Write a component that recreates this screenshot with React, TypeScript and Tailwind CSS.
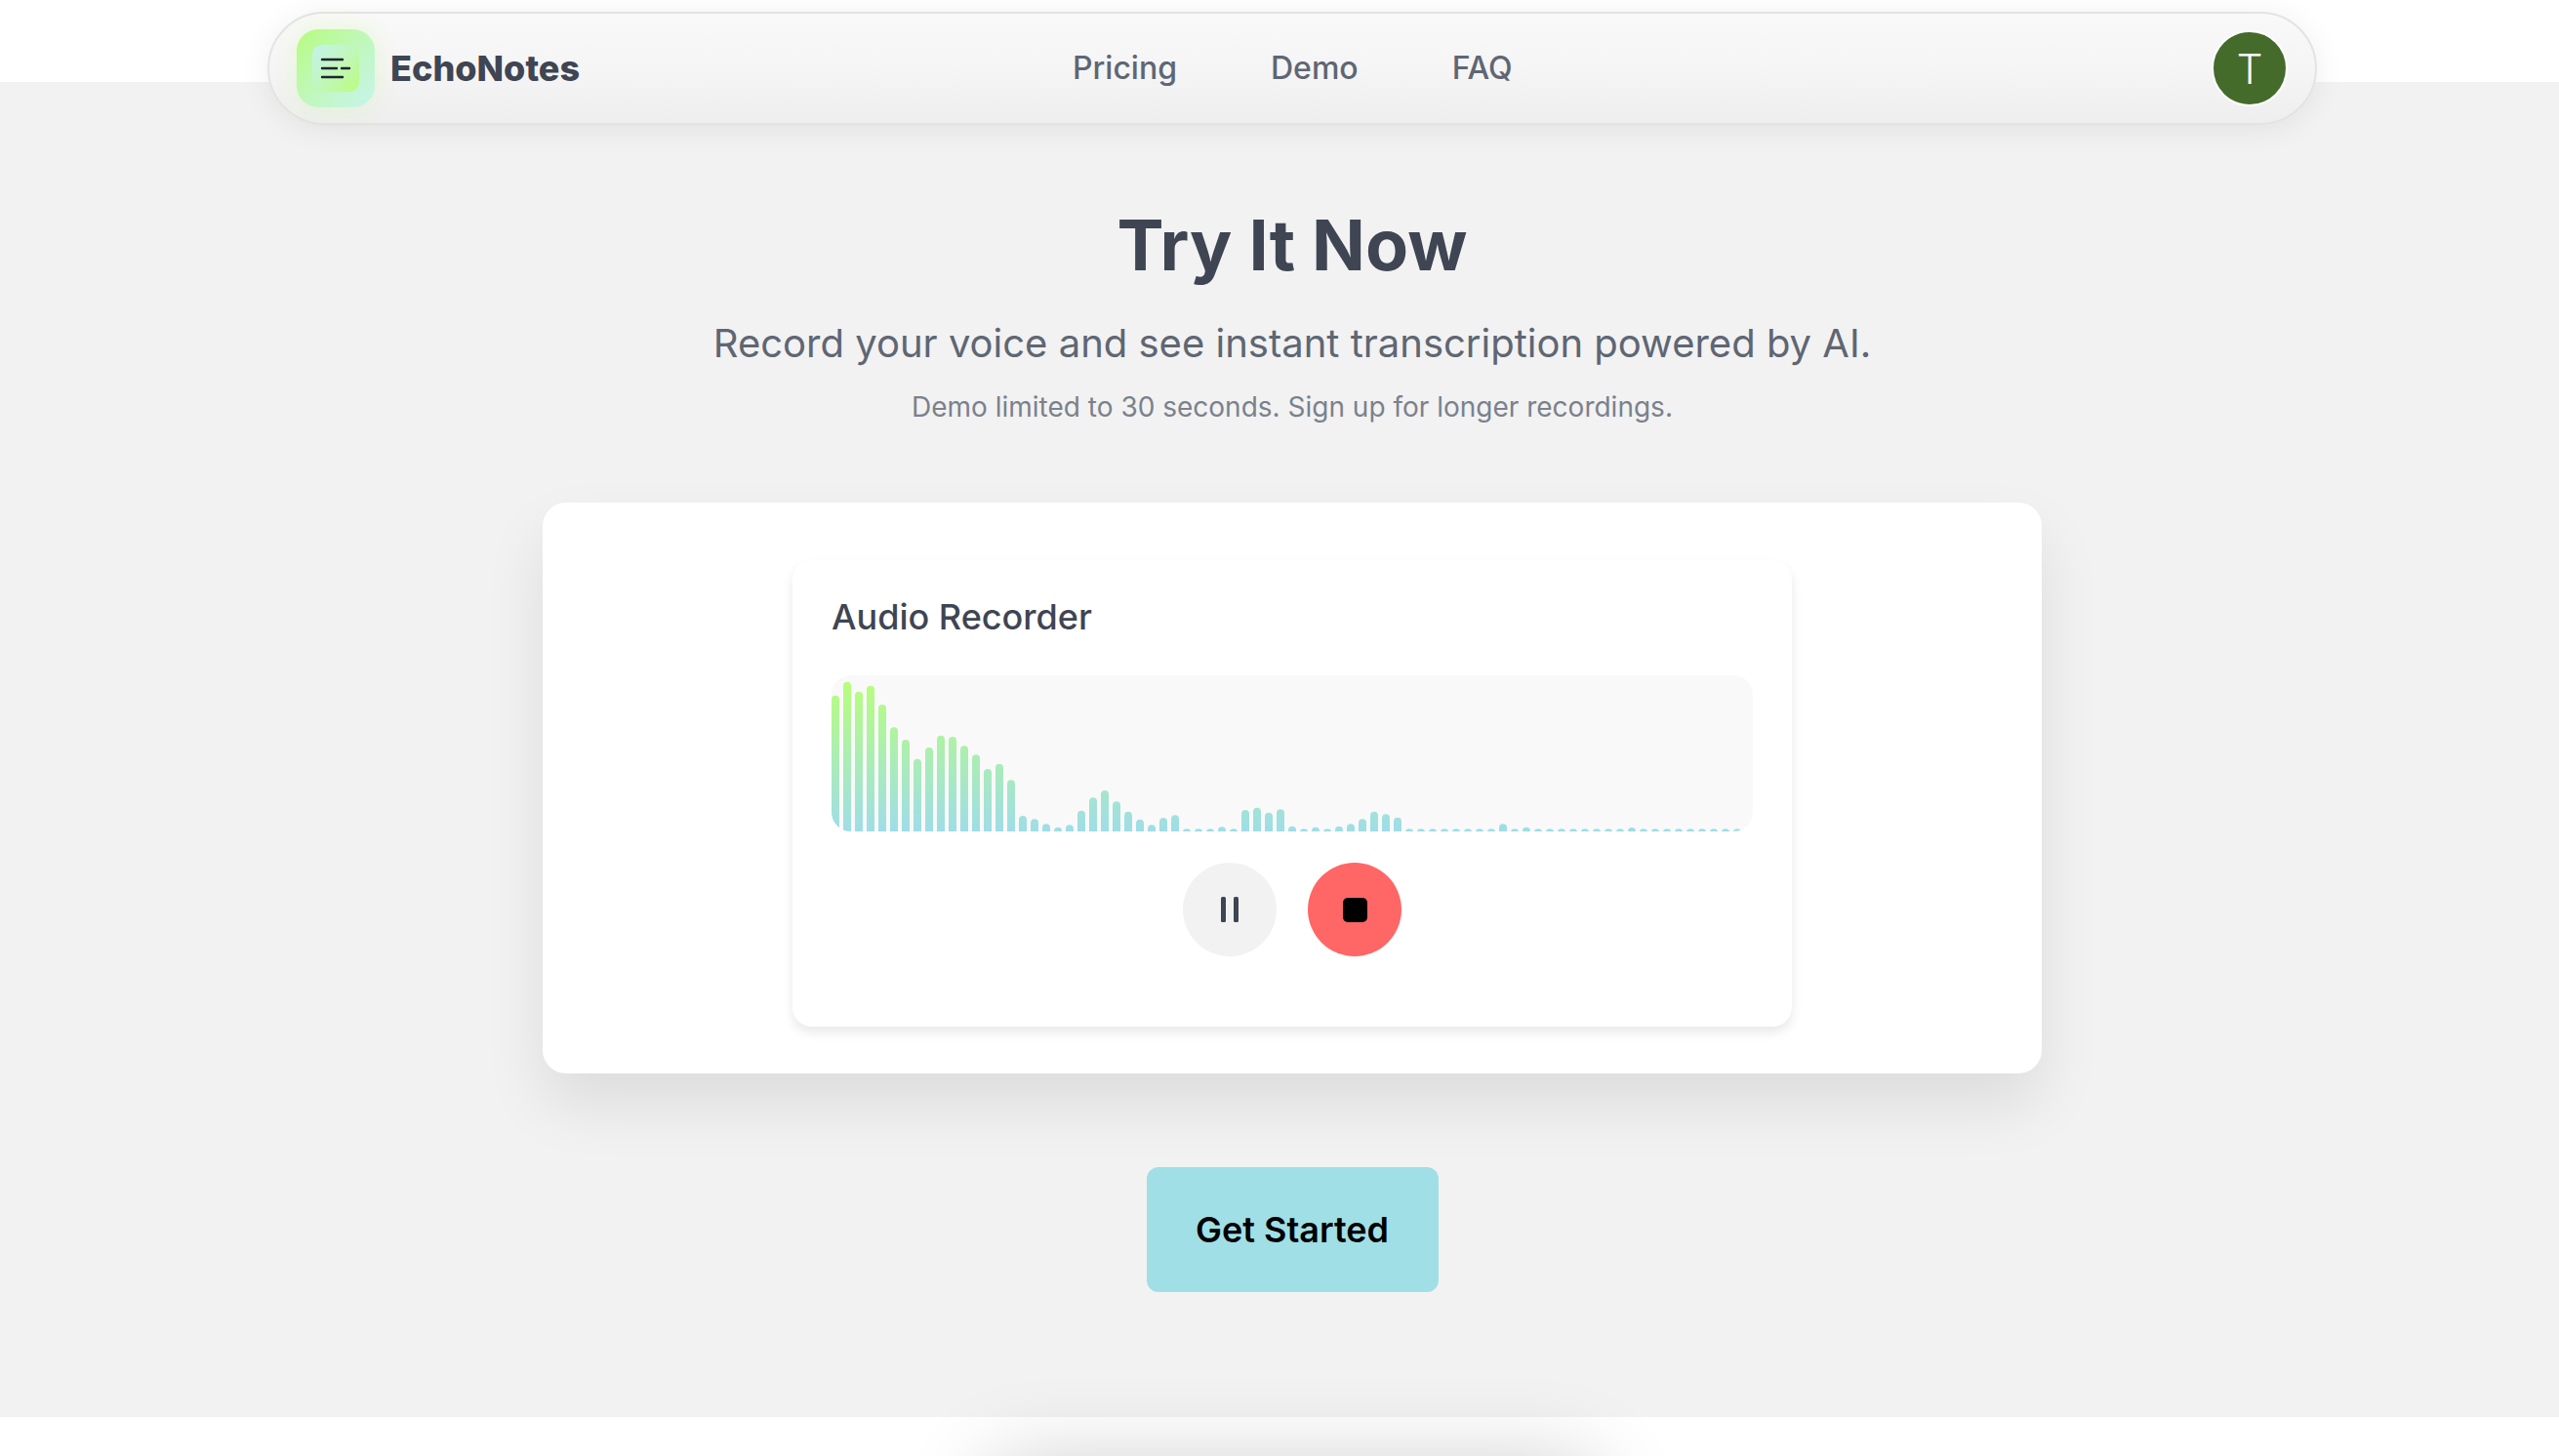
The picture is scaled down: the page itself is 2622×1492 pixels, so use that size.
const barTops = [
  130, 88, 118, 100, 158, 228, 266, 325, 290, 253, 257, 285, 312, 356, 340, 390, 500, 510, 525, 535,
  528, 484, 444, 422, 456, 487, 511, 528, 506, 498, 540, 540, 540, 534, 540, 482, 475, 490, 480, 532,
  540, 535, 540, 532, 525, 510, 487, 495, 505, 540, 540, 540, 540, 540, 540, 540, 540, 525, 540, 535,
  540, 540, 540, 540, 540, 540, 540, 540, 536, 540, 540, 540, 540, 540, 540, 540, 540, 540,
];

function Waveform() {
  return (
    <svg viewBox="0 0 944 160" className="block w-full h-full blur-[0.6px]">
      <defs>
        <linearGradient id="bars" gradientUnits="userSpaceOnUse" x1="0" y1="0" x2="0" y2="160">
          <stop offset="0" stopColor="#b9ff78" />
          <stop offset="1" stopColor="#9fdde8" />
        </linearGradient>
      </defs>
      {barTops.map((top, i) => {
        const h = Math.max(2, (545 - top) / 3 + 1);
        return <rect key={i} x={i * 12} y={160 - h} width={8} height={h + 4} rx={4} fill="url(#bars)" />;
      })}
    </svg>
  );
}

function NavBar() {
  return (
    <nav className="absolute left-[274px] top-[12px] w-[2100px] h-[116px] rounded-[58px] border-2 border-[#e3e3e3] bg-gradient-to-b from-[#f9f9f9] via-[#f5f5f5] to-[#eeeeee] shadow-[0_4px_32px_rgba(0,0,0,0.07)] flex items-center justify-between pl-[28px] pr-[28px]">
      <div className="flex items-center gap-[16px]">
        <div className="w-[80px] h-[80px] rounded-[22px] bg-gradient-to-br from-[#b8fb7c] to-[#c8f3ee] flex items-center justify-center shadow-[0_0_24px_rgba(184,251,124,0.3)]">
          <div className="w-[48px] h-[48px] rounded-[10px] bg-gradient-to-br from-[#c6f1ee] to-[#bdfb7a] flex items-center justify-center">
            <svg width="32" height="24" viewBox="0 0 32 24" fill="none" stroke="#1f2430" strokeWidth="2.4" strokeLinecap="round">
              <path d="M2 3h21" />
              <path d="M2 12h15" />
              <path d="M22 12h8" />
              <path d="M2 21h21" />
            </svg>
          </div>
        </div>
        <span className="text-[36px] font-extrabold text-[#3f4552]">EchoNotes</span>
      </div>
      <div className="absolute left-[823px] flex items-center gap-[96px] text-[32px] font-medium text-[#5f6673]">
        <a>Pricing</a>
        <a>Demo</a>
        <a>FAQ</a>
      </div>
      <div className="w-[78px] h-[78px] rounded-full border-2 border-white bg-[#446b2a] flex items-center justify-center text-[42px] font-light text-white">
        T
      </div>
    </nav>
  );
}

export default function App() {
  return (
    <div className="relative h-[1492px] overflow-hidden bg-white font-['Inter',sans-serif]">
      <div className="h-[84px]" />
      <section className="w-full h-[1368px] bg-[#f2f2f2] pt-[122px]">
        {/* page was a bit wider than the window, so the middle sits 13px right */}
        <div className="w-[2648px] flex flex-col items-center">
          <h1 className="text-[72px] leading-[90px] font-[750] text-[#3f4552]">Try It Now</h1>
          <p className="mt-[26px] text-[40px] leading-[60px] text-[#5f6673]">Record your voice and see instant transcription powered by AI.</p>
          <p className="mt-[14px] text-[28px] leading-[42px] text-[#7b818c]">Demo limited to 30 seconds. Sign up for longer recordings.</p>

          <div className="mt-[77px] w-[1536px] h-[585px] rounded-[24px] bg-white shadow-[0_32px_64px_rgba(0,0,0,0.09)] flex justify-center pt-[59px]">
            <div className="w-[1024px] h-[478px] rounded-[20px] bg-white shadow-[0_6px_12px_rgba(0,0,0,0.09)] px-[40px] pt-[33px]">
              <h2 className="text-[36px] leading-[50px] font-medium text-[#3f4552]">Audio Recorder</h2>
              <div className="mt-[35px] h-[160px] rounded-[20px] overflow-hidden bg-[#f9f9f9]">
                <Waveform />
              </div>
              <div className="mt-[32px] flex justify-center gap-[32px]">
                <button className="w-[96px] h-[96px] rounded-full bg-[#f2f2f2] flex items-center justify-center">
                  <svg width="40" height="40" viewBox="0 0 40 40" fill="#3f4552">
                    <rect x="11" y="7" width="5" height="26" rx="1.5" />
                    <rect x="24" y="7" width="5" height="26" rx="1.5" />
                  </svg>
                </button>
                <button className="w-[96px] h-[96px] rounded-full bg-[#ff6666] flex items-center justify-center">
                  <div className="w-[25px] h-[25px] rounded-[5px] bg-black" />
                </button>
              </div>
            </div>
          </div>

          <button className="mt-[96px] w-[299px] h-[128px] rounded-[12px] bg-[#a0dfe6] text-[36px] font-semibold text-black">
            Get Started
          </button>
        </div>
      </section>
      <div className="w-[2648px]">
        <div className="mx-auto mt-[47px] w-[620px] h-[200px] rounded-[24px] bg-white shadow-[0_0_90px_rgba(0,0,0,0.2)]" />
      </div>
      <NavBar />
    </div>
  );
}
